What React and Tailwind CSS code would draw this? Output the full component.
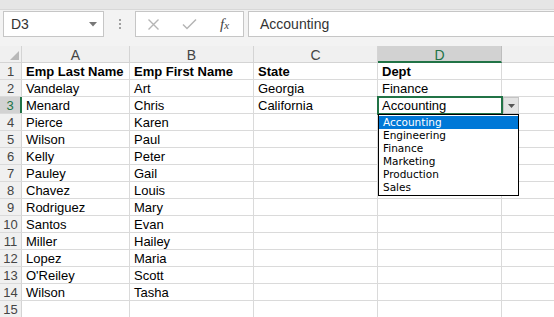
const rows = [
  ['Emp Last Name', 'Emp First Name', 'State', 'Dept'],
  ['Vandelay', 'Art', 'Georgia', 'Finance'],
  ['Menard', 'Chris', 'California', 'Accounting'],
  ['Pierce', 'Karen', '', ''],
  ['Wilson', 'Paul', '', ''],
  ['Kelly', 'Peter', '', ''],
  ['Pauley', 'Gail', '', ''],
  ['Chavez', 'Louis', '', ''],
  ['Rodriguez', 'Mary', '', ''],
  ['Santos', 'Evan', '', ''],
  ['Miller', 'Hailey', '', ''],
  ['Lopez', 'Maria', '', ''],
  ["O'Reiley", 'Scott', '', ''],
  ['Wilson', 'Tasha', '', ''],
  ['', '', '', ''],
];

const cols = [
  { key: 'A', w: 'w-[108px]' },
  { key: 'B', w: 'w-[124px]' },
  { key: 'C', w: 'w-[124px]' },
  { key: 'D', w: 'w-[124px]' },
];

const options = ['Accounting', 'Engineering', 'Finance', 'Marketing', 'Production', 'Sales'];

function FormulaBar() {
  return (
    <div className="bg-[#f3f3f3]">
      <div className="h-[10px] bg-[#e6e6e6] border-b border-[#d8d8d8]" />
      <div className="h-[36px] flex items-start px-[3px] pt-[1px]">
        {/* Name box */}
        <div className="w-[101px] h-[26px] bg-white border border-[#c6c6c6] flex items-center justify-between pl-[7px] pr-[6px]">
          <span className="text-[14px] text-[#333]">D3</span>
          <svg width="8" height="5" viewBox="0 0 8 5"><path d="M0 0h8L4 4.5z" fill="#777" /></svg>
        </div>
        {/* grip dots */}
        <div className="w-[31px] h-[26px] flex flex-col items-center justify-center gap-[2px]">
          <span className="w-[2px] h-[2px] bg-[#a0a0a0]" />
          <span className="w-[2px] h-[2px] bg-[#a0a0a0]" />
          <span className="w-[2px] h-[2px] bg-[#a0a0a0]" />
        </div>
        {/* cancel / enter / fx */}
        <div className="w-[109px] h-[26px] bg-white border border-[#c6c6c6] flex items-center pl-[11px]">
          <svg width="13" height="13" viewBox="0 0 13 13">
            <path d="M1.5 1.5l10 10M11.5 1.5l-10 10" stroke="#b5b5b5" strokeWidth="1.4" />
          </svg>
          <svg className="ml-[22px]" width="15" height="12" viewBox="0 0 15 12">
            <path d="M1 6.5l4 4L14 1.5" stroke="#b5b5b5" strokeWidth="1.5" fill="none" />
          </svg>
          <span className="ml-[23px] text-[#444] italic leading-none" style={{ fontFamily: '"Liberation Serif", serif' }}>
            <span className="text-[15px]">f</span>
            <span className="text-[11px]">x</span>
          </span>
        </div>
        {/* formula input */}
        <div className="flex-1 ml-[4px] -mr-[4px] h-[26px] bg-white border border-[#c6c6c6] flex items-center pl-[11px] pt-px">
          <span className="text-[14px] text-[#333]">Accounting</span>
        </div>
      </div>
    </div>
  );
}

function HeaderRow() {
  return (
    <div className="flex h-[17px] bg-[#f0f0f0] border-b border-[#d4d4d4]">
      <div className="w-[22px] border-r border-[#d4d4d4] relative">
        <svg className="absolute right-[2px] bottom-[2px]" width="9" height="9" viewBox="0 0 9 9">
          <path d="M9 0v9H0z" fill="#b8b8b8" />
        </svg>
      </div>
      {cols.map((c) => (
        <div
          key={c.key}
          className={
            c.key === 'D'
              ? `${c.w} -mb-px border-r border-[#bdbdbd] bg-[#d2d2d2] border-b-2 border-b-[#217346] flex items-center justify-center pt-[2px] text-[14px] text-[#217346] leading-none`
              : `${c.w} border-r border-[#d4d4d4] flex items-center justify-center pt-[2px] text-[14px] text-[#444] leading-none`
          }
        >
          {c.key}
        </div>
      ))}
      <div className="flex-1" />
    </div>
  );
}

function Row({ n, cells }) {
  const active = n === 3;
  return (
    <div className="flex h-[17px] border-b border-[#dadada]">
      <div
        className={
          active
            ? 'w-[22px] bg-[#d2d2d2] border-r-2 border-[#217346] flex items-end justify-center text-[13px] leading-[14px] text-[#217346]'
            : 'w-[22px] bg-[#f0f0f0] border-r border-[#d4d4d4] flex items-end justify-center text-[13px] leading-[14px] text-[#444]'
        }
      >
        {n}
      </div>
      {cols.map((c, i) => (
        <div
          key={c.key}
          className={`${c.w} border-r border-[#dadada] flex items-end pl-[4px] text-[13px] leading-[14px] text-black whitespace-nowrap ${n === 1 ? 'font-bold' : ''}`}
        >
          {cells[i]}
        </div>
      ))}
      <div className="flex-1" />
    </div>
  );
}

export default function App() {
  return (
    <div
      className="w-[554px] h-[317px] overflow-hidden bg-white relative"
      style={{ fontFamily: '"Liberation Sans", Arial, sans-serif' }}
    >
      <FormulaBar />
      <HeaderRow />
      {rows.map((r, i) => (
        <Row key={i} n={i + 1} cells={r} />
      ))}

      {/* active cell outline */}
      <div className="absolute left-[377px] top-[96px] w-[126px] h-[19px] border-2 border-[#217346] pointer-events-none" />

      {/* dropdown arrow button */}
      <div className="absolute left-[503px] top-[97px] w-[16px] h-[17px] bg-[#e3e3e3] border border-[#c4c4c4] flex items-center justify-center">
        <svg width="7" height="4" viewBox="0 0 7 4"><path d="M0 0h7L3.5 4z" fill="#555" /></svg>
      </div>

      {/* validation list */}
      <div
        className="absolute left-[378px] top-[114px] w-[141px] bg-white border border-black py-px"
        style={{ fontFamily: '"DejaVu Sans", sans-serif' }}
      >
        {options.map((o, i) => (
          <div
            key={o}
            className={`h-[13px] leading-[13px] pl-[4px] text-[10.5px] ${i === 0 ? 'bg-[#0078d7] text-white' : 'text-black'}`}
          >
            {o}
          </div>
        ))}
      </div>
    </div>
  );
}
